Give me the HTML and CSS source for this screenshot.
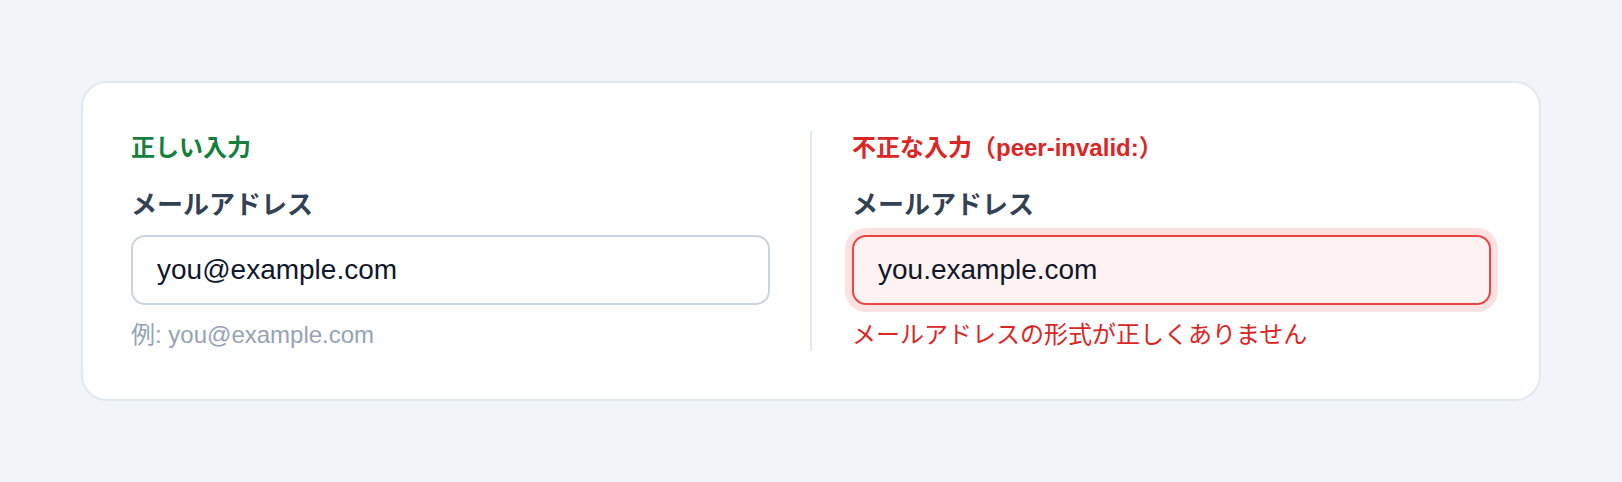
FILE: index.html
```html
<!DOCTYPE html>
<html lang="ja">
<head>
<meta charset="utf-8">
<title>peer-invalid demo</title>
<link rel="stylesheet" href="styles.css">
</head>
<body>
<main class="page">
  <section class="card">
    <div class="col">
      <h2 class="title title-ok">正しい入力</h2>
      <label class="label" for="email-ok">メールアドレス</label>
      <input class="field" id="email-ok" type="text" value="you@example.com">
      <p class="hint">例: you@example.com</p>
    </div>
    <div class="divider"></div>
    <div class="col">
      <h2 class="title title-bad">不正な入力（peer-invalid:）</h2>
      <label class="label" for="email-bad">メールアドレス</label>
      <input class="field field-bad" id="email-bad" type="text" value="you.example.com">
      <p class="error">メールアドレスの形式が正しくありません</p>
    </div>
  </section>
</main>
</body>
</html>
```

FILE: styles.css
```css
html, body {
  margin: 0;
  padding: 0;
}

body {
  background: #f1f5f9;
  font-family: "Liberation Sans", "Noto Sans CJK JP", sans-serif;
}

.page {
  padding: 81px;
}

.card {
  display: flex;
  gap: 40px;
  background: #ffffff;
  border: 2px solid #e2e8f0;
  border-radius: 26px;
  padding: 48px;
}

.col {
  flex: 1 1 0;
  display: flex;
  flex-direction: column;
  min-width: 0;
}

.divider {
  width: 2px;
  background: #e2e8f0;
  flex: 0 0 2px;
}

.title {
  margin: 0;
  font-size: 24px;
  line-height: 34px;
  font-weight: 700;
}

.title-ok {
  color: #15803d;
}

.title-bad {
  color: #dc2626;
}

.label {
  margin-top: 22px;
  font-size: 26px;
  line-height: 36px;
  font-weight: 700;
  color: #334155;
}

.field {
  margin-top: 12px;
  box-sizing: border-box;
  width: 100%;
  height: 70px;
  padding: 0 24px;
  font-family: "Liberation Sans", "Noto Sans CJK JP", sans-serif;
  font-size: 28px;
  color: #0f172a;
  background: #ffffff;
  border: 2px solid #cbd5e1;
  border-radius: 14px;
  outline: none;
}

.field-bad {
  background: #fef2f2;
  border-color: #ef4444;
  box-shadow: 0 0 0 7px #fee2e2;
}

.hint,
.error {
  margin: 14px 0 0;
  font-size: 24px;
  line-height: 32px;
}

.hint {
  color: #94a3b8;
}

.error {
  color: #dc2626;
}
```
